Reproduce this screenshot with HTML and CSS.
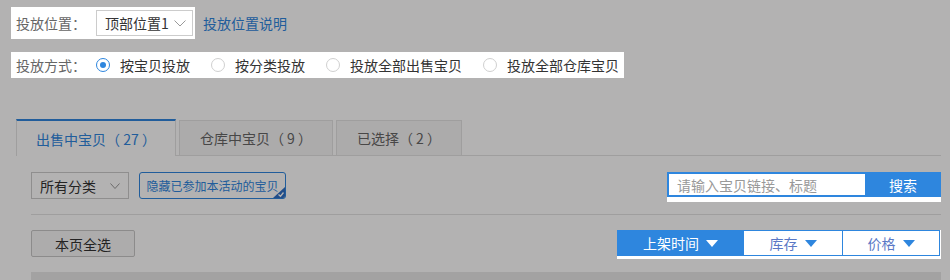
FILE: index.html
```html
<!DOCTYPE html>
<html lang="zh-CN">
<head>
<meta charset="utf-8">
<title>投放设置</title>
<link rel="stylesheet" href="styles.css">
</head>
<body>
<div class="page">
  <div class="row-pos">
    <div class="pos-box hl">
      <span class="label">投放位置：</span>
      <div class="select sel-pos">
        <span>顶部位置1</span>
        <svg width="12" height="7" viewBox="0 0 12 7"><polyline points="0.5,0.5 6,6 11.5,0.5" fill="none" stroke="#999" stroke-width="1"/></svg>
      </div>
    </div>
    <a class="link" href="#">投放位置说明</a>
  </div>

  <div class="way hl">
    <span class="label">投放方式：</span>
    <label class="radio on"><i></i><span>按宝贝投放</span></label>
    <label class="radio"><i></i><span>按分类投放</span></label>
    <label class="radio"><i></i><span>投放全部出售宝贝</span></label>
    <label class="radio last"><i></i><span>投放全部仓库宝贝</span></label>
  </div>

  <div class="tabs">
    <div class="tab active t1">出售中宝贝（ 27 ）</div>
    <div class="tab t2">仓库中宝贝（ 9 ）</div>
    <div class="tab t3">已选择（ 2 ）</div>
  </div>

  <div class="panel">
    <div class="filter">
      <div class="select sel-cat">
        <span>所有分类</span>
        <svg width="10" height="6" viewBox="0 0 10 6"><polyline points="0.5,0.5 5,5.5 9.5,0.5" fill="none" stroke="#999" stroke-width="1"/></svg>
      </div>
      <div class="hide-btn">隐藏已参加本活动的宝贝
        <svg class="corner" width="12" height="11" viewBox="0 0 12 11"><path d="M12 0 L12 11 L0 11 Z" fill="#2e6fc4"/><polyline points="5.5,7.5 7.5,9.2 10.5,5.5" fill="none" stroke="#fff" stroke-width="1.3"/></svg>
      </div>
      <div class="search hl">
        <div class="search-input">请输入宝贝链接、标题</div>
        <div class="search-btn">搜索</div>
      </div>
    </div>
    <div class="divider"></div>
    <div class="actions">
      <div class="btn">本页全选</div>
      <div class="sort hl">
        <div class="sort-group">
          <div class="sort-item on s1">上架时间<b></b></div>
          <div class="sort-item s2">库存<b></b></div>
          <div class="sort-item s3">价格<b></b></div>
        </div>
      </div>
    </div>
    <div class="thead"></div>
  </div>
</div>
<div class="mask"></div>
</body>
</html>
```
FILE: styles.css
```css
* { box-sizing: border-box; margin: 0; padding: 0; }
html, body { width: 950px; height: 280px; overflow: hidden; }
body {
  background: #fff;
  font-family: "Noto Sans CJK SC", "Microsoft YaHei", sans-serif;
  font-size: 14px;
  color: #333;
}
.page { padding: 7px 9px 0 11px; }
.mask { position: fixed; left: 0; top: 0; right: 0; bottom: 0; background: rgba(2, 0, 1, 0.3); z-index: 10; }
.hl { position: relative; z-index: 11; background: #fff; }

.row-pos { display: flex; align-items: center; }
.pos-box { display: flex; align-items: center; padding: 3px 2px 3px 5px; }
.label { width: 80px; color: #666; flex: none; }
.select {
  display: flex; align-items: center; justify-content: space-between;
  border: 1px solid #ccc; background: #fff; color: #333;
}
.sel-pos { width: 97px; height: 26px; padding: 0 6px 0 8px; }
.link { margin-left: 8px; color: #2e86de; text-decoration: none; }

.way {
  display: flex; align-items: center; height: 26px; width: fit-content;
  margin-top: 13px; padding: 0 5px;
}
.radio { display: flex; align-items: center; margin-right: 21px; color: #333; }
.radio.last { margin-right: 0; }
.radio i {
  width: 14px; height: 14px; border: 1px solid #d0d0d0; border-radius: 50%;
  margin-right: 10px; display: flex; align-items: center; justify-content: center;
}
.radio.on i { border-color: #2e86de; }
.radio.on i::after { content: ""; width: 6px; height: 6px; border-radius: 50%; background: #2e86de; }

.tabs {
  display: flex; align-items: flex-end; margin: 41px 0 0 5px;
  border-bottom: 1px solid #e3e3e3; height: 37px;
}
.tab {
  height: 35px; display: flex; align-items: center; justify-content: center;
  border: 1px solid #e3e3e3; border-bottom: 0; background: #f5f5f5; color: #666;
  margin-right: 3px; white-space: pre;
}
.tab.active { height: 37px; margin-bottom: -1px; border-top: 2px solid #2e86de; background: #fff; color: #2e86de; }
.t1 { width: 160px; }
.t2 { width: 154px; }
.t3 { width: 126px; }

.panel { padding: 16px 0 0 20px; }
.filter { display: flex; align-items: flex-start; }
.sel-cat { width: 98px; height: 27px; padding: 0 8px 0 8px; }
.hide-btn {
  position: relative; margin-left: 10px; width: 147px; height: 27px;
  border: 1px solid #2e86de; border-radius: 3px; color: #2e86de; font-size: 12px;
  display: flex; align-items: center; justify-content: center; overflow: hidden;
}
.corner { position: absolute; right: 0; bottom: 0; }
.search { margin-left: auto; display: flex; width: 274px; padding-bottom: 5px; }
.search-input {
  width: 198px; height: 25px; border: 2px solid #2e86de; border-right: 0;
  color: #999; display: flex; align-items: center; padding-left: 8px;
}
.search-btn {
  flex: 1; height: 25px; background: #2e86de; color: #fff;
  display: flex; align-items: center; justify-content: center;
}
.divider { margin-top: 12px; border-top: 1px solid #e3e3e3; }
.actions { display: flex; align-items: flex-start; margin-top: 15px; }
.btn {
  width: 104px; height: 27px; border: 1px solid #c8c8c8; border-radius: 2px;
  background: #f7f7f7; color: #333; display: flex; align-items: center; justify-content: center;
}
.sort { margin-left: auto; padding: 0 1px 3px 0; }
.sort-group { display: flex; width: 323px; height: 26px; border: 1px solid #2e86de; }
.sort-item {
  display: flex; align-items: center; justify-content: center; color: #5a78c6;
  border-right: 1px solid #2e86de;
}
.sort-item b {
  width: 0; height: 0; margin-left: 7px;
  border-left: 6.5px solid transparent; border-right: 6.5px solid transparent; border-top: 7px solid #2e86de;
}
.sort-item.on { background: #2e86de; color: #fff; }
.sort-item.on b { border-top-color: #fff; }
.s1 { width: 126px; }
.s2 { width: 99px; }
.s3 { flex: 1; border-right: 0; }
.thead { margin-top: 13px; height: 40px; background: #e9e9e9; }
```
